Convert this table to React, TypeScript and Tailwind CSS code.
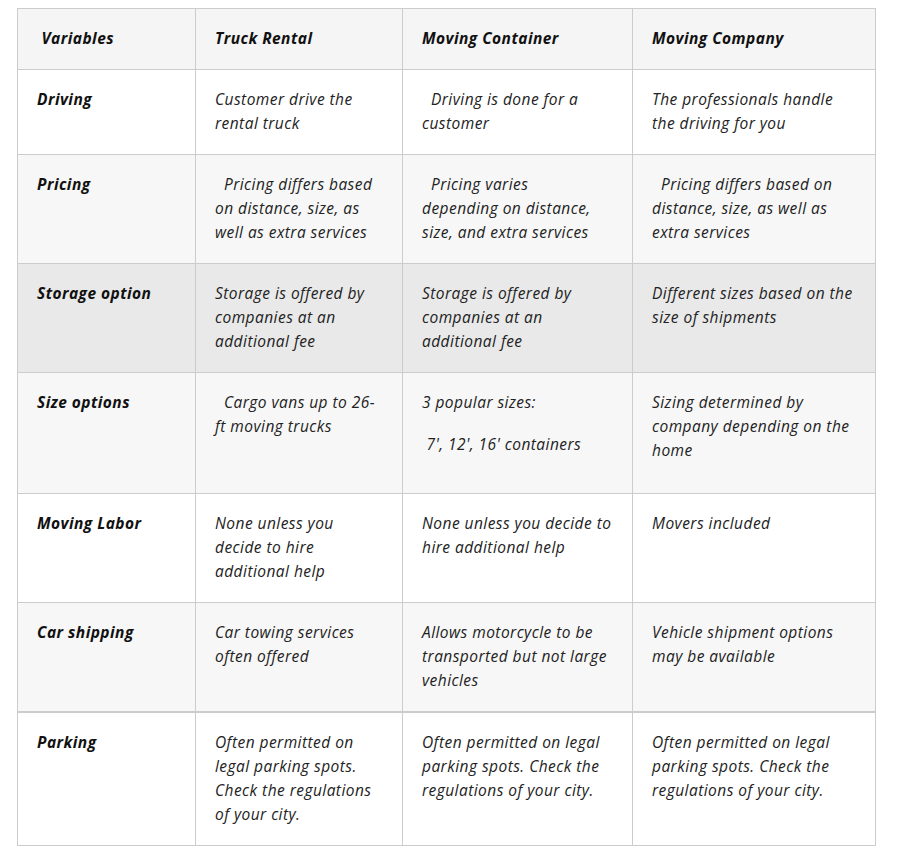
import React from "react";

type Cell = { lines: string[]; second?: string[] };

const rows: { label: string; bg: string; thick?: boolean; cells: Cell[] }[] = [
  {
    label: "Driving",
    bg: "bg-white",
    cells: [
      { lines: ["Customer drive the", "rental truck"] },
      { lines: ["\u00a0\u00a0Driving is done for a", "customer"] },
      { lines: ["The professionals handle", "the driving for you"] },
    ],
  },
  {
    label: "Pricing",
    bg: "bg-[#f7f7f7]",
    cells: [
      { lines: ["\u00a0\u00a0Pricing differs based", "on distance, size, as", "well as extra services"] },
      { lines: ["\u00a0\u00a0Pricing varies", "depending on distance,", "size, and extra services"] },
      { lines: ["\u00a0\u00a0Pricing differs based on", "distance, size, as well as", "extra services"] },
    ],
  },
  {
    label: "Storage option",
    bg: "bg-[#e9e9e9]",
    cells: [
      { lines: ["Storage is offered by", "companies at an", "additional fee"] },
      { lines: ["Storage is offered by", "companies at an", "additional fee"] },
      { lines: ["Different sizes based on the", "size of shipments"] },
    ],
  },
  {
    label: "Size options",
    bg: "bg-[#f7f7f7]",
    cells: [
      { lines: ["\u00a0\u00a0Cargo vans up to 26-", "ft moving trucks"] },
      { lines: ["3 popular sizes:"], second: ["\u00a07', 12', 16' containers"] },
      { lines: ["Sizing determined by", "company depending on the", "home"] },
    ],
  },
  {
    label: "Moving Labor",
    bg: "bg-white",
    cells: [
      { lines: ["None unless you", "decide to hire", "additional help"] },
      { lines: ["None unless you decide to", "hire additional help"] },
      { lines: ["Movers included"] },
    ],
  },
  {
    label: "Car shipping",
    bg: "bg-[#f7f7f7]",
    cells: [
      { lines: ["Car towing services", "often offered"] },
      { lines: ["Allows motorcycle to be", "transported but not large", "vehicles"] },
      { lines: ["Vehicle shipment options", "may be available"] },
    ],
  },
  {
    label: "Parking",
    bg: "bg-white",
    thick: true,
    cells: [
      { lines: ["Often permitted on", "legal parking spots.", "Check the regulations", "of your city."] },
      { lines: ["Often permitted on legal", "parking spots. Check the", "regulations of your city."] },
      { lines: ["Often permitted on legal", "parking spots. Check the", "regulations of your city."] },
    ],
  },
];

function Lines({ lines }: { lines: string[] }) {
  return (
    <>
      {lines.map((l, i) => (
        <span key={i} className="block whitespace-pre">
          {l}
        </span>
      ))}
    </>
  );
}

export default function App() {
  const td = "border border-[#cccccc] align-top pl-[19px] pr-2 pt-[17px] pb-[19px]";
  return (
    <div
      className="min-h-[859px] bg-white pl-[17px] pt-2 text-[15.5px] leading-[24px] tracking-[0.45px] italic text-[#222222]"
      style={{ fontFamily: '"Open Sans", Lato, sans-serif' }}
    >
      <table className="table-fixed border-collapse w-[858px]">
        <colgroup>
          <col className="w-[178px]" />
          <col className="w-[207px]" />
          <col className="w-[230px]" />
          <col className="w-[243px]" />
        </colgroup>
        <thead>
          <tr className="bg-[#f5f5f5]">
            <th className={`${td} text-left font-bold text-[#111111]`}>{"\u00a0Variables"}</th>
            <th className={`${td} text-left font-bold text-[#111111]`}>Truck Rental</th>
            <th className={`${td} text-left font-bold text-[#111111]`}>Moving Container</th>
            <th className={`${td} text-left font-bold text-[#111111]`}>Moving Company</th>
          </tr>
        </thead>
        <tbody>
          {rows.map((r) => (
            <tr key={r.label} className={r.bg}>
              <td className={`${td} ${r.thick ? "border-t-2" : ""} font-bold text-[#111111]`}>{r.label}</td>
              {r.cells.map((c, i) => (
                <td key={i} className={`${td} ${r.thick ? "border-t-2" : ""}`}>
                  <div className={c.second ? "mb-[18px]" : ""}>
                    <Lines lines={c.lines} />
                  </div>
                  {c.second && (
                    <div className="mb-[18px]">
                      <Lines lines={c.second} />
                    </div>
                  )}
                </td>
              ))}
            </tr>
          ))}
        </tbody>
      </table>
    </div>
  );
}
